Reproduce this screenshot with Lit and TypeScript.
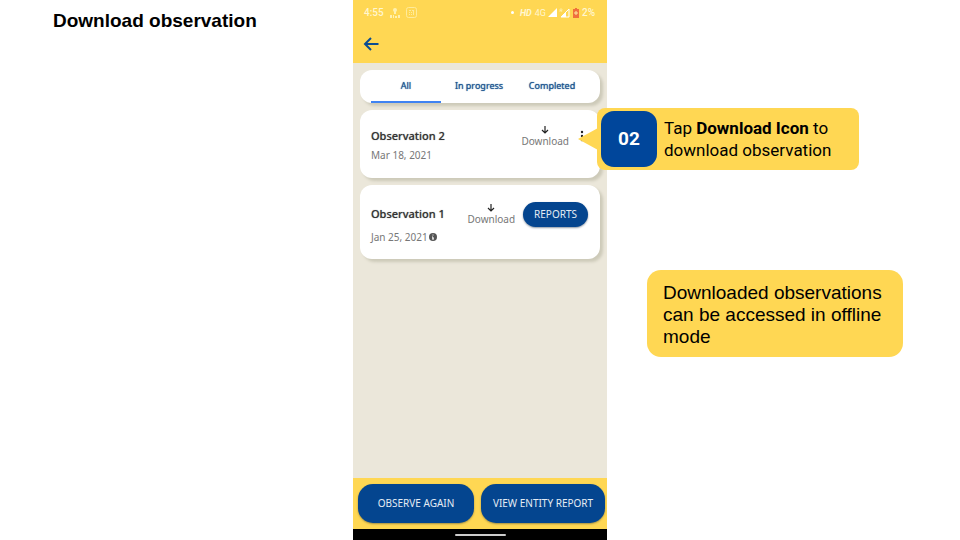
import { LitElement, html, css, nothing } from "lit";
import { customElement, property, state } from "lit/decorators.js";
import { classMap } from "lit/directives/class-map.js";

interface Observation {
  name: string;
  date: string;
  hasReport: boolean;
}

const OBSERVATIONS: Observation[] = [
  { name: "Observation 2", date: "Mar 18, 2021", hasReport: false },
  { name: "Observation 1", date: "Jan 25, 2021", hasReport: true },
];

const TABS = ["All", "In progress", "Completed"];

const buttonReset = css`
  button {
    margin: 0;
    padding: 0;
    border: 0;
    background: none;
    font: inherit;
    color: inherit;
    cursor: pointer;
  }
  svg {
    display: block;
  }
`;

@customElement("status-bar")
export class StatusBar extends LitElement {
  static styles = css`
    :host {
      display: flex;
      align-items: center;
      justify-content: space-between;
      height: 24px;
      padding: 1px 12px 0 11px;
      box-sizing: border-box;
      font: 500 10px/12px Roboto, sans-serif;
      color: #fff6cf;
    }
    .group {
      display: flex;
      align-items: center;
    }
    .left {
      gap: 6px;
    }
    .right {
      gap: 2px;
    }
    .dot {
      width: 3px;
      height: 3px;
      margin-right: 4px;
      border-radius: 50%;
      background: #fff;
    }
    .hd {
      margin-right: 1px;
      font-size: 9px;
      font-weight: 700;
      font-style: italic;
    }
    .net {
      font-size: 9px;
      font-weight: 400;
    }
    svg {
      display: block;
    }
  `;

  render() {
    return html`
      <div class="group left">
        <span>4:55</span>
        <svg width="10" height="12" viewBox="0 0 10 12" fill="#fff1b0">
          <circle cx="5" cy="3" r="2" />
          <path d="M4 4h2v3H4z" />
          <path d="M0 8h2v3H0zM3 8h1v3H3zM5 9h2v2H5zM8 8h2v3H8z" />
        </svg>
        <svg width="11" height="11" viewBox="0 0 11 11" fill="none" stroke="#ffeb9a">
          <rect x="0.5" y="0.5" width="10" height="10" rx="2" />
          <path d="M3 3.500h2M6 3.500h2M7.500 3v5M3 5.500h1M5 5.500h1M3 7.500h1M5 7.500h1" />
        </svg>
      </div>
      <div class="group right">
        <span class="dot"></span>
        <span class="hd">HD</span>
        <span class="net">4G</span>
        <svg width="9" height="9" viewBox="0 0 9 9" fill="#fff"><path d="M9 0v9H0z" /></svg>
        <svg width="11" height="10" viewBox="0 0 11 10" fill="none">
          <path d="M10 1v8H2z" stroke="#fff" />
          <path d="M2 9l5-5v5z" fill="#fff" />
          <path d="M1 4V1h2v1.500H1M2 2.500L3 4" stroke="#fff1b0" stroke-width="0.700" />
        </svg>
        <svg width="8" height="10" viewBox="0 0 8 10">
          <path d="M3 0h2v1h2v9H1V1h2z" fill="#f0703c" />
          <path d="M4 3v4M2 5h4" stroke="#ffe9a0" />
        </svg>
        <span>2%</span>
      </div>
    `;
  }
}

@customElement("observation-card")
export class ObservationCard extends LitElement {
  @property({ attribute: false }) item!: Observation;

  static styles = [
    buttonReset,
    css`
      :host {
        display: block;
      }
      .card {
        display: flex;
        align-items: flex-start;
        min-height: 68px;
        box-sizing: border-box;
        padding: 16px 12px 12px 11px;
        border-radius: 12px;
        background: #fff;
        box-shadow: 3px 3px 3px #cdcab9;
      }
      .card.reported {
        min-height: 74px;
      }
      .text {
        flex: 1;
        min-width: 0;
      }
      h2 {
        margin: 0;
        font-size: 11px;
        line-height: 20px;
        font-weight: 500;
        color: #333;
        text-shadow: 0 0 1px #888;
      }
      .reported h2 {
        padding-top: 3px;
      }
      .date {
        display: flex;
        align-items: center;
        gap: 1px;
        font-size: 10px;
        line-height: 18px;
        color: #777;
      }
      .reported .date {
        padding-top: 4px;
      }
      .download {
        display: flex;
        flex-direction: column;
        align-items: center;
        font-size: 10px;
        line-height: 14px;
        color: #777;
      }
      .reported .download {
        padding-top: 3px;
      }
      .more {
        width: 8px;
        margin: 4px 2px 0 9px;
      }
      .reports {
        height: 25px;
        margin: 1px 0 0 8px;
        padding: 0 11px 2px;
        border-radius: 13px;
        background: #04458f;
        box-shadow: 0 1px 2px #8b97a5;
        font-size: 10px;
        color: #e4ecf4;
      }
    `,
  ];

  render() {
    const { name, date, hasReport } = this.item;
    return html`
      <article class=${classMap({ card: true, reported: hasReport })}>
        <div class="text">
          <h2>${name}</h2>
          <div class="date">
            <span>${date}</span>
            ${hasReport
              ? html`<svg width="8" height="8" viewBox="0 0 8 8">
                  <circle cx="4" cy="4" r="4" fill="#555" />
                  <path d="M4 1.500v1M3 4h1v2M3 6h2" stroke="#fff" fill="none" />
                </svg>`
              : nothing}
          </div>
        </div>
        <button class="download">
          <svg width="8" height="8" viewBox="0 0 8 8" fill="none" stroke="#222" stroke-width="1.200">
            <path d="M4 0v7M1 4l3 3 3-3" />
          </svg>
          Download
        </button>
        ${hasReport
          ? html`<button class="reports">REPORTS</button>`
          : html`<button class="more" aria-label="More options">
              <svg width="8" height="12" viewBox="0 0 8 12" fill="#222">
                <circle cx="4" cy="2" r="1.200" />
                <circle cx="4" cy="6" r="1.200" />
                <circle cx="4" cy="10" r="1.200" />
              </svg>
            </button>`}
      </article>
    `;
  }
}

@customElement("phone-screen")
export class PhoneScreen extends LitElement {
  @state() private tab = 0;

  static styles = [
    buttonReset,
    css`
      :host {
        display: flex;
        flex-direction: column;
        background: #ebe7da;
        font-family: "Noto Sans", sans-serif;
      }
      header {
        background: #ffd753;
      }
      .toolbar {
        display: flex;
        align-items: center;
        height: 39px;
        padding: 0 10px;
      }
      main {
        flex: 1;
        display: flex;
        flex-direction: column;
        gap: 7px;
        padding: 7px;
      }
      .tabs {
        display: grid;
        grid-template-columns: repeat(3, 1fr);
        height: 33px;
        padding: 0 13px 0 11px;
        gap: 3px;
        border-radius: 12px;
        background: #fff;
        box-shadow: 3px 3px 3px #cdcab9;
      }
      .tab {
        border-bottom: 2px solid transparent;
        font-size: 9px;
        color: #1c5690;
        text-shadow: 0 0 1px #1c5690;
      }
      .tab.active {
        border-color: #3f83f2;
      }
      footer {
        display: flex;
        gap: 7px;
        padding: 6px 2px 6px 5px;
        background: #ffd753;
      }
      .action {
        flex: 116 1 0;
        height: 39px;
        padding-bottom: 2px;
        border-radius: 15px;
        background: #04458f;
        box-shadow: 0 1px 2px #a08d45;
        font-size: 10px;
        color: #e4ecf4;
      }
      .action.wide {
        flex-grow: 124;
      }
      .nav {
        display: flex;
        align-items: center;
        justify-content: center;
        height: 11px;
        background: #000;
      }
      .pill {
        width: 51px;
        height: 2px;
        border-radius: 1px;
        background: #ccc;
      }
    `,
  ];

  render() {
    return html`
      <header>
        <status-bar></status-bar>
        <div class="toolbar">
          <button aria-label="Back">
            <svg width="16" height="14" viewBox="0 0 16 14" fill="none" stroke="#0b4c92" stroke-width="2">
              <path d="M15.500 7H2M8 1L2 7l6 6" />
            </svg>
          </button>
        </div>
      </header>
      <main>
        <div class="tabs" role="tablist">
          ${TABS.map(
            (label, i) => html`<button
              role="tab"
              aria-selected=${i === this.tab}
              class=${classMap({ tab: true, active: i === this.tab })}
              @click=${() => (this.tab = i)}
            >${label}</button>`
          )}
        </div>
        ${OBSERVATIONS.map((o) => html`<observation-card .item=${o}></observation-card>`)}
      </main>
      <footer>
        <button class="action">OBSERVE AGAIN</button>
        <button class="action wide">VIEW ENTITY REPORT</button>
      </footer>
      <div class="nav"><span class="pill"></span></div>
    `;
  }
}

@customElement("app-root")
export class AppRoot extends LitElement {
  static styles = css`
    :host {
      display: grid;
      grid-template-columns: 353fr 254fr 353fr;
      min-height: 100vh;
      background: #fff;
      color: #000;
      font-family: "Liberation Sans", Arial, sans-serif;
    }
    h1 {
      margin: 0;
      padding: 10px 0 0 53px;
      font-size: 19px;
      line-height: 22px;
    }
    .notes {
      display: flex;
      flex-direction: column;
      align-items: flex-start;
      gap: 100px;
      padding-top: 108px;
    }
    .step {
      position: relative;
      display: flex;
      align-items: center;
      gap: 7px;
      box-sizing: border-box;
      width: 262px;
      margin-left: -10px;
      padding: 3px 4px;
      border-radius: 8px;
      background: #ffd753;
      font: 17px/22px Roboto, sans-serif;
    }
    .pointer {
      position: absolute;
      left: -19px;
      top: 20px;
      display: block;
    }
    .number {
      display: flex;
      flex: none;
      align-items: center;
      justify-content: center;
      width: 56px;
      height: 56px;
      border-radius: 13px;
      background: #00469b;
      font-size: 19px;
      font-weight: 700;
      color: #fff;
    }
    .step p {
      flex: 1;
      margin: 0;
      padding-right: 16px;
    }
    .hint {
      box-sizing: border-box;
      width: 256px;
      margin: 0 0 0 40px;
      padding: 12px 16px 9px;
      border-radius: 14px;
      background: #ffd753;
      font-size: 19px;
      line-height: 22px;
    }
  `;

  render() {
    return html`
      <h1>Download observation</h1>
      <phone-screen></phone-screen>
      <section class="notes">
        <div class="step">
          <svg class="pointer" width="20" height="22" viewBox="0 0 20 22"><path d="M0 11L20 0v22z" fill="#ffd753" /></svg>
          <span class="number">02</span>
          <p>Tap <b>Download Icon</b> to download observation</p>
        </div>
        <p class="hint">Downloaded observations can be accessed in offline mode</p>
      </section>
    `;
  }
}
